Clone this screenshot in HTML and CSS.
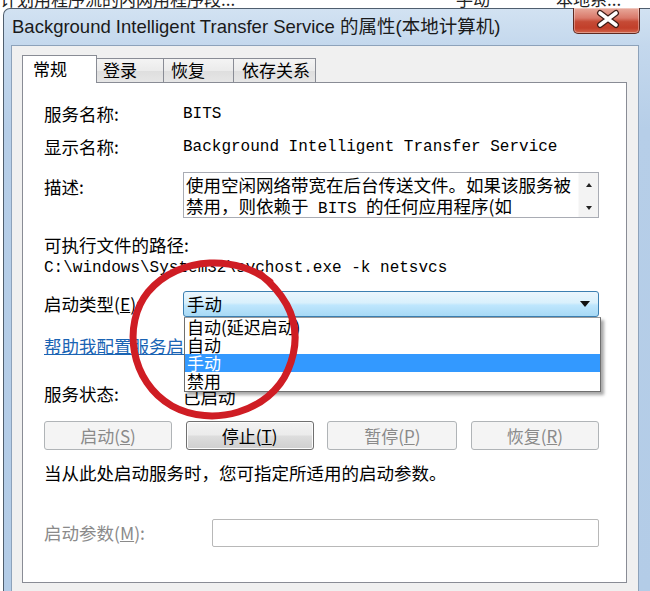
FILE: index.html
```html
<!DOCTYPE html>
<html lang="zh-CN">
<head>
<meta charset="utf-8">
<title>Background Intelligent Transfer Service 的属性</title>
<link rel="stylesheet" href="styles.css">
</head>
<body>
<div class="bgstrip">
  <span class="bg1">计划用程序流的内网用程序段...</span>
  <span class="bg2">手动</span>
  <span class="bg3">本地系...</span>
</div>
<div class="window">
  <div class="titlebar">
    <div class="title">Background Intelligent Transfer Service 的属性(本地计算机)</div>
    <div class="close">
      <svg width="67" height="26" viewBox="0 0 67 26">
        <path d="M26 6 L42 18 M42 6 L26 18" stroke="#3d1b16" stroke-width="6" stroke-linecap="round" fill="none"/>
        <path d="M26 6 L42 18 M42 6 L26 18" stroke="#ffffff" stroke-width="3.6" stroke-linecap="round" fill="none"/>
      </svg>
    </div>
  </div>
  <div class="client">
    <div class="tabs">
      <div class="tab active">常规</div>
      <div class="tab t2">登录</div>
      <div class="tab t3">恢复</div>
      <div class="tab t4">依存关系</div>
    </div>
    <div class="panel">
      <div class="row r1"><span class="lab">服务名称:</span><span class="mono">BITS</span></div>
      <div class="row r2"><span class="lab">显示名称:</span><span class="mono">Background Intelligent Transfer Service</span></div>
      <div class="row r3">
        <span class="lab lab-desc">描述:</span>
        <div class="desc">
          <div class="desc-text">使用空闲网络带宽在后台传送文件。如果该服务被<br>禁用，则依赖于<span class="mono"> BITS </span>的任何应用程序(如</div>
          <div class="sbar">
            <svg width="20" height="44" viewBox="0 0 20 44">
              <path d="M7 14 L13 14 L10 10 Z" fill="#222"/>
              <path d="M7 33 L13 33 L10 37 Z" fill="#222"/>
            </svg>
          </div>
        </div>
      </div>
      <div class="row r4"><span>可执行文件的路径:</span></div>
      <div class="row r5"><span class="mono">C:\windows\System32\svchost.exe -k netsvcs</span></div>
      <div class="row r6">
        <span class="lab">启动类型(<u>E</u>):</span>
        <div class="combo">
          <span class="combo-val">手动</span>
          <svg class="combo-arrow" width="10" height="6" viewBox="0 0 10 6"><path d="M0 0 L10 0 L5 6 Z" fill="#111"/></svg>
        </div>
        <div class="droplist">
          <div class="item">自动(延迟启动)</div>
          <div class="item">自动</div>
          <div class="item sel">手动</div>
          <div class="item">禁用</div>
        </div>
      </div>
      <div class="row r7"><a class="link">帮助我配置服务启动选项。</a></div>
      <div class="row r8"><span class="lab">服务状态:</span><span class="status">已启动</span></div>
      <div class="btnrow">
        <div class="btn dis w128">启动(<u>S</u>)</div>
        <div class="btn on w128">停止(<u>T</u>)</div>
        <div class="btn dis w130">暂停(<u>P</u>)</div>
        <div class="btn dis w128">恢复(<u>R</u>)</div>
      </div>
      <div class="row r10"><span>当从此处启动服务时，您可指定所适用的启动参数。</span></div>
      <div class="row r11"><span class="lab lab-param">启动参数(<u>M</u>):</span><div class="input"></div></div>
    </div>
  </div>
</div>
<svg class="circle" width="190" height="175" viewBox="0 0 190 175">
  <path d="M150 30 C 120 4, 60 2, 28 40 C 2 72, 10 130, 52 154 C 92 176, 150 160, 168 118 C 184 80, 172 48, 140 22" stroke="#cf1d24" stroke-width="7" fill="none" stroke-linecap="round"/>
</svg>
</body>
</html>
```

FILE: styles.css
```css
* { box-sizing: border-box; }
html, body { margin: 0; padding: 0; }
body {
  width: 650px;
  height: 591px;
  overflow: hidden;
  position: relative;
  background: #ffffff;
  color: #000;
  font-family: "Noto Sans CJK SC", sans-serif;
}

.bgstrip {
  height: 8px;
  overflow: hidden;
  display: flex;
  font-size: 17px;
  line-height: 17px;
  white-space: nowrap;
  color: #222;
}
.bgstrip span { margin-top: -10px; }
.bg1 { width: 456px; }
.bg2 { width: 100px; }

.window {
  margin-left: 3px;
  width: 660px;
  height: 583px;
  border: 1px solid #4f5e6e;
  border-bottom: none;
  border-radius: 7px 7px 0 0;
  background: linear-gradient(180deg, #d2e2f2 0px, #c4d8ed 36px, #b6cee8 120px, #b3cce7 100%);
  padding-left: 7px;
}

.titlebar {
  display: flex;
  margin-left: -7px;
  width: 636px;
  height: 36px;
}
.title {
  flex: 1;
  padding-left: 8px;
  font-family: "Liberation Sans", "Noto Sans CJK SC", sans-serif;
  font-size: 18.5px;
  line-height: 36px;
  color: #1a1a1a;
  white-space: nowrap;
}
.close {
  width: 67px;
  height: 26px;
  margin-top: -1px;
  border: 1px solid #5e2a22;
  border-top: none;
  border-radius: 0 0 5px 5px;
  background: linear-gradient(180deg, #e8aa9c 0%, #d9796a 40%, #c54a35 55%, #c23f2a 80%, #d2654c 100%);
  box-shadow: inset 0 0 0 1px rgba(255,255,255,0.35);
}
.close svg { display: block; margin-top: -1px; }

.client {
  width: 628px;
  height: 546px;
  border: 1px solid #8da2ba;
  border-bottom: none;
  background: #f0f0f0;
  padding: 9px 0 0 10px;
}

.tabs {
  display: flex;
  align-items: flex-end;
  height: 27px;
  position: relative;
  z-index: 2;
}
.tab {
  height: 24px;
  border: 1px solid #898c95;
  border-bottom: none;
  background: linear-gradient(180deg, #f4f4f4 0%, #ebebeb 50%, #dedede 51%, #e6e6e6 100%);
  font-size: 17px;
  line-height: 22px;
  white-space: nowrap;
  margin-left: -1px;
}
.tab.active {
  margin-left: 0;
  height: 28px;
  margin-bottom: -1px;
  width: 75px;
  background: #ffffff;
  padding-left: 10px;
  line-height: 25px;
  position: relative;
  z-index: 3;
}
.t2 { width: 68px; padding-left: 6px; }
.t3 { width: 71px; padding-left: 7px; }
.t4 { width: 83px; padding-left: 8px; }

.panel {
  width: 605px;
  height: 501px;
  border: 1px solid #898c95;
  background: #ffffff;
  padding: 21px 27px 0 21px;
  font-size: 17.5px;
}

.row {
  display: flex;
  line-height: 20px;
  white-space: nowrap;
}
.lab { width: 139px; flex-shrink: 0; }
.mono {
  font-family: "Liberation Mono", monospace;
  font-size: 16px;
  white-space: pre;
}

.r2 { margin-top: 13px; }
.r3 { margin-top: 15px; }
.lab-desc { margin-top: 5px; }
.desc {
  width: 416px;
  height: 46px;
  border: 1px solid #a9acb4;
  display: flex;
  background: #fff;
}
.desc-text {
  flex: 1;
  padding: 1px 0 0 2px;
  line-height: 21px;
  overflow: hidden;
}
.sbar {
  width: 20px;
  background: #f3f3f3;
  border-left: 1px solid #f9f9f9;
}
.sbar svg { display: block; }

.r4 { margin-top: 17px; }
.r5 { margin-top: 3px; }
.r6 { margin-top: 13px; position: relative; align-items: center; height: 26px; }
.combo {
  width: 416px;
  height: 26px;
  border: 1px solid #3c7fb1;
  border-radius: 3px;
  background: linear-gradient(180deg, #eaf6fd 0%, #d9f0fc 45%, #bee6fd 55%, #a7d9f5 100%);
  display: flex;
  align-items: center;
  padding-left: 3px;
  padding-right: 8px;
}
.combo-val { flex: 1; line-height: 20px; }
.combo-arrow { display: block; }

.droplist {
  position: absolute;
  left: 140px;
  top: 26px;
  width: 417px;
  border: 1px solid #6f6f6f;
  border-top-color: #9a9a9a;
  background: #ffffff;
  box-shadow: 3px 3px 3px rgba(0,0,0,0.35);
  z-index: 5;
  padding-bottom: 1px;
  font-size: 17px;
}
.item {
  height: 18px;
  line-height: 18px;
  padding-left: 2px;
}
.item.sel { background: #3399ff; color: #fff; }

.r7 { margin-top: 19px; }
.link { color: #1a64b4; text-decoration: underline; }
.r8 { margin-top: 28px; }
.status { margin-top: 3px; }

.btnrow {
  margin-top: 14px;
  display: flex;
  justify-content: space-between;
}
.btn {
  height: 29px;
  border-radius: 3px;
  text-align: center;
  line-height: 27px;
  font-size: 17px;
}
.w128 { width: 128px; }
.w130 { width: 130px; }
.btn.dis {
  border: 1px solid #b0b4b7;
  background: #f4f4f4;
  color: #8a8a8a;
}
.btn.on {
  border: 1px solid #707070;
  background: linear-gradient(180deg, #f3f3f3 0%, #ebebeb 48%, #dddddd 52%, #cfcfcf 100%);
  box-shadow: inset 0 0 0 1px #fcfcfc;
  color: #000;
}

.r10 { margin-top: 13px; }
.r11 { margin-top: 36px; align-items: center; }
.lab-param { width: 168px; color: #8a8a8a; }
.input {
  width: 387px;
  height: 28px;
  border: 1px solid #b8b8b8;
  border-radius: 2px;
  background: #fff;
}

.circle {
  position: absolute;
  left: 120px;
  top: 252px;
  z-index: 10;
}
```
